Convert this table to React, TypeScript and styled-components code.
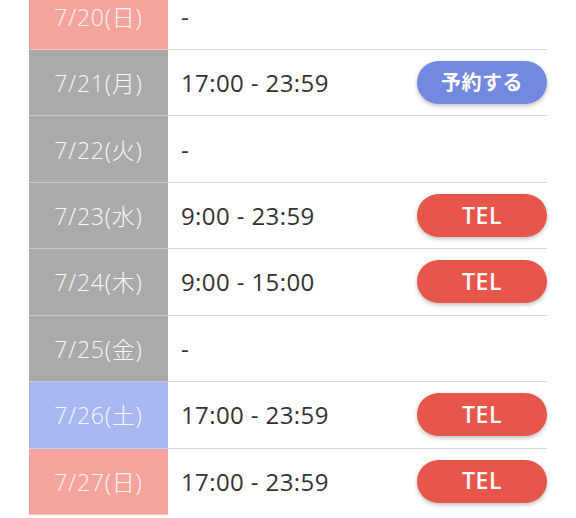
import React from "react";
import styled, { createGlobalStyle } from "styled-components";

const Global = createGlobalStyle`
  html, body { margin: 0; padding: 0; background: #ffffff; }
  body { font-family: "Open Sans", "Noto Sans CJK JP", sans-serif; overflow: hidden; }
`;

type Kind = "sun" | "sat" | "week";
type Action = "reserve" | "tel" | null;

const dayBg: Record<Kind, string> = {
  sun: "#f4a49d",
  sat: "#a7b7f1",
  week: "#aaaaaa",
};

const Table = styled.div`
  margin: -16.5px 0 0 29px;
  width: 518px;
  display: flex;
  flex-direction: column;
`;

const Row = styled.div`
  display: grid;
  grid-template-columns: 139px 1fr;
  height: 66.45px;
  box-sizing: border-box;
`;

const DateCell = styled.div<{ $kind: Kind }>`
  background: ${(p) => dayBg[p.$kind]};
  color: #fbf7f6;
  font-family: "Open Sans", "Noto Sans CJK JP", sans-serif;
  font-weight: 300;
  font-size: 23px;
  letter-spacing: 0.8px;
  display: flex;
  align-items: center;
  justify-content: center;
  border-bottom: 1px solid rgba(255, 255, 255, 0.35);
  box-sizing: border-box;
  padding-bottom: 1px;
`;

const Body = styled.div<{ $last: boolean }>`
  display: flex;
  align-items: center;
  justify-content: space-between;
  padding-left: 13px;
  border-bottom: 1px solid ${(p) => (p.$last ? "transparent" : "#d9d9d9")};
  box-sizing: border-box;
`;

const Time = styled.span`
  font-family: "Open Sans", "Noto Sans CJK JP", sans-serif;
  font-size: 24px;
  font-weight: 400;
  letter-spacing: 0.4px;
  color: #333333;
`;

const Button = styled.button<{ $variant: "reserve" | "tel" }>`
  width: 130px;
  height: 43px;
  border: none;
  border-radius: 22px;
  background: ${(p) => (p.$variant === "reserve" ? "#7189e1" : "#e8554a")};
  color: #ffffff;
  font-family: "Open Sans", "Noto Sans CJK JP", sans-serif;
  font-weight: ${(p) => (p.$variant === "reserve" ? 700 : 600)};
  font-size: ${(p) => (p.$variant === "reserve" ? "20px" : "23px")};
  letter-spacing: 0.5px;
  box-shadow: 0 2px 4px rgba(0, 0, 0, 0.25);
  display: flex;
  align-items: center;
  justify-content: center;
  padding: 0 0 2px 0;
  cursor: pointer;
`;

const rows: { date: string; kind: Kind; time: string; action: Action }[] = [
  { date: "7/20(日)", kind: "sun", time: "-", action: null },
  { date: "7/21(月)", kind: "week", time: "17:00 - 23:59", action: "reserve" },
  { date: "7/22(火)", kind: "week", time: "-", action: null },
  { date: "7/23(水)", kind: "week", time: "9:00 - 23:59", action: "tel" },
  { date: "7/24(木)", kind: "week", time: "9:00 - 15:00", action: "tel" },
  { date: "7/25(金)", kind: "week", time: "-", action: null },
  { date: "7/26(土)", kind: "sat", time: "17:00 - 23:59", action: "tel" },
  { date: "7/27(日)", kind: "sun", time: "17:00 - 23:59", action: "tel" },
];

export default function App() {
  return (
    <>
      <Global />
      <Table>
        {rows.map((r, i) => (
          <Row key={r.date}>
            <DateCell $kind={r.kind}>{r.date}</DateCell>
            <Body $last={i === rows.length - 1}>
              <Time>{r.time}</Time>
              {r.action && (
                <Button $variant={r.action}>
                  {r.action === "reserve" ? "予約する" : "TEL"}
                </Button>
              )}
            </Body>
          </Row>
        ))}
      </Table>
    </>
  );
}
